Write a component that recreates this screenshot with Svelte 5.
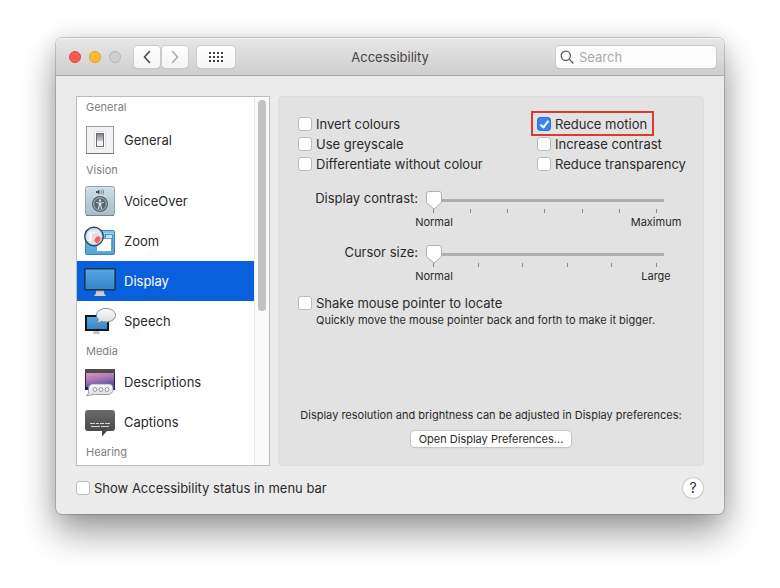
<script lang="ts">
    type Item = { name: string; icon: string };
    type Section = { title: string; items: Item[] };

    const sections: Section[] = [
        { title: "General", items: [{ name: "General", icon: "general" }] },
        {
            title: "Vision",
            items: [
                { name: "VoiceOver", icon: "voiceover" },
                { name: "Zoom", icon: "zoom" },
                { name: "Display", icon: "display" },
                { name: "Speech", icon: "speech" }
            ]
        },
        {
            title: "Media",
            items: [
                { name: "Descriptions", icon: "descriptions" },
                { name: "Captions", icon: "captions" }
            ]
        },
        { title: "Hearing", items: [] }
    ];

    const sliders = [
        { id: "contrast", label: "Display contrast:", ticks: 7, max: "Maximum" },
        { id: "cursor", label: "Cursor size:", ticks: 6, max: "Large" }
    ];

    let selected = $state("Display");
    let options = $state([
        { label: "Invert colours", checked: false, marked: false },
        { label: "Reduce motion", checked: true, marked: true },
        { label: "Use greyscale", checked: false, marked: false },
        { label: "Increase contrast", checked: false, marked: false },
        { label: "Differentiate without colour", checked: false, marked: false },
        { label: "Reduce transparency", checked: false, marked: false }
    ]);
</script>

{#snippet itemIcon(icon: string)}
    <svg class="icon" viewBox="0 0 32 32" aria-hidden="true">
        {#if icon === "general"}
            <rect x="2.5" y="2.5" width="27" height="27" fill="#f3f3f5" stroke="#9a9a9d" />
            <path d="M2 29.5h28" stroke="#77777a" />
            <rect x="10.5" y="7.5" width="11" height="17" rx="1" fill="#fff" stroke="#dcdce0" />
            <rect x="12.5" y="9.5" width="7" height="13" fill="#f4f4f4" stroke="#6c6c6f" />
            <rect x="13" y="10" width="6" height="7" fill="url(#switch)" />
        {:else if icon === "voiceover"}
            <rect x="1.5" y="1.5" width="29" height="29" rx="2" fill="url(#steel)" stroke="#93a5ad" />
            <path d="M2 30.5h28" stroke="#74818a" />
            <path d="M12 6h1.500l2-1.500v5l-2-1.500H12z" fill="#4b555b" />
            <path d="M17 5.500q1 1.500 0 3M18.700 4.500q1.800 2.500 0 5" fill="none" stroke="#5b666c" stroke-width=".8" />
            <circle cx="16" cy="19" r="8" fill="#56636a" />
            <circle cx="16" cy="19" r="6.300" fill="none" stroke="#b7c6cd" stroke-width=".9" />
            <circle cx="16" cy="15.500" r="1.200" fill="#d7e4ea" />
            <path d="M12.300 17.500l2.700.5h2l2.700-.5M16 18v2.500M15.200 18v3l-.9 3M16.800 18v3l.9 3" fill="none" stroke="#d7e4ea" stroke-width="1.100" />
        {:else if icon === "zoom"}
            <rect x="1.500" y="5.500" width="29" height="24" rx="1" fill="url(#sky)" stroke="#3b87b5" />
            <path d="M2 8.500h28" stroke="#a8d8f5" />
            <rect x="21.500" y="9.500" width="7" height="14" fill="#bfe2f7" stroke="#4b94c2" />
            <rect x="12.500" y="13.500" width="15" height="13" fill="#fff" stroke="#6ba6cc" />
            <circle cx="10" cy="11.500" r="9.200" fill="#dfeaf3" stroke="#394653" stroke-width="1.600" />
            <path d="M5 7h6v9H5z" fill="#f3f6fa" />
            <path d="M8 9h7v9H8z" fill="#f3d3d8" />
            <path d="M11.500 17.500a3.800 3.800 0 0 1 5-5.500 7.500 7.500 0 0 1-3 6.500z" fill="#e8636a" />
            <circle cx="10" cy="11.500" r="8" fill="none" stroke="#b9c8d5" stroke-width=".8" />
        {:else if icon === "display"}
            <path d="M12.500 25h7l.8 4 1.700 1.500v.5H10v-.5l1.700-1.500z" fill="#c9cdd0" />
            <path d="M12.500 25h7l.3 1.500h-7.600z" fill="#8f979d" />
            <rect x=".8" y="3.800" width="30.400" height="21" rx="1" fill="url(#screen)" stroke="#173451" stroke-width="1.600" />
        {:else if icon === "speech"}
            <path d="M10 26h5l1 3h-7z" fill="#bfc4c8" />
            <rect x="2" y="11" width="22" height="14" fill="url(#screen)" stroke="#101820" stroke-width="2" />
            <path d="M22 3.500c5.500 0 9.500 2.900 9.500 6.700s-4 6.800-9.500 6.800c-1.600 0-3.100-.3-4.400-.7-1.400 1.100-3.300 1.500-5.200 1.300 1.200-.9 2-2 2.100-3.200-1.300-1.200-2-2.600-2-4.200 0-3.800 4-6.700 9.500-6.700z" fill="url(#bubble)" stroke="#858b92" />
        {:else if icon === "descriptions"}
            <rect x="1" y="3" width="30" height="21" fill="#2b2238" />
            <rect x="1" y="3" width="30" height="4" fill="#4d4b50" />
            <rect x="2" y="7" width="28" height="14" fill="url(#sunset)" />
            <path d="M9 18h16a4 4 0 0 1 4 4.500v1a5 5 0 0 1-5 5H8c-1.500 1-3.500 1.300-5.500 1 1.500-1 2-2 2-3.500v-3.500A4.500 4.500 0 0 1 9 18z" fill="url(#bubble)" stroke="#8c8899" stroke-width=".8" />
            <g fill="#fff" stroke="#8b8993">
                <circle cx="11" cy="23.500" r="1.900" />
                <circle cx="17" cy="23.500" r="1.900" />
                <circle cx="23" cy="23.500" r="1.900" />
            </g>
        {:else if icon === "captions"}
            <path d="M4 4h24a3 3 0 0 1 3 3v15a3 3 0 0 1-3 3h-5l-5 5.500V25H4a3 3 0 0 1-3-3V7a3 3 0 0 1 3-3z" fill="url(#slate)" />
            <path d="M6 17.500h20" stroke="#d6d6d6" stroke-dasharray="5 1 3 1 4 1" />
            <path d="M7 20.500h18" stroke="#d6d6d6" stroke-dasharray="9 1 8 1" />
        {/if}
    </svg>
{/snippet}

<svg class="defs" width="0" height="0" aria-hidden="true">
    <defs>
        <linearGradient id="switch" x2="0" y2="1"><stop stop-color="#858588" /><stop offset="1" stop-color="#cfcfd2" /></linearGradient>
        <linearGradient id="steel" x2="0" y2="1"><stop stop-color="#d0e1e8" /><stop offset="1" stop-color="#a6bcc6" /></linearGradient>
        <linearGradient id="sky" x2="0" y2="1"><stop stop-color="#7fc4ee" /><stop offset="1" stop-color="#4ea3d8" /></linearGradient>
        <linearGradient id="screen" x2="0" y2="1"><stop stop-color="#57a9e4" /><stop offset="1" stop-color="#3584c8" /></linearGradient>
        <linearGradient id="bubble" x2="0" y2="1"><stop stop-color="#fbfbfd" /><stop offset="1" stop-color="#d9dce2" /></linearGradient>
        <linearGradient id="sunset" x2=".4" y2="1"><stop stop-color="#dd94ae" /><stop offset=".5" stop-color="#a97ab8" /><stop offset="1" stop-color="#5c50a2" /></linearGradient>
        <linearGradient id="slate" x2="0" y2="1"><stop stop-color="#6b6b6b" /><stop offset="1" stop-color="#404040" /></linearGradient>
    </defs>
</svg>

<main class="window">
    <header>
        <div class="tools">
            <div class="lights">
                <button class="light red" aria-label="Close"></button>
                <button class="light yellow" aria-label="Minimise"></button>
                <button class="light off" aria-label="Full screen" disabled></button>
            </div>
            <div class="nav">
                <button class="tool" aria-label="Back">
                    <svg width="8" height="14" viewBox="0 0 8 14"><path d="M6.500 1.500L1.500 7l5 5.500" fill="none" stroke="#4a4a4a" stroke-width="1.600" stroke-linecap="round" /></svg>
                </button>
                <button class="tool" aria-label="Forward">
                    <svg width="8" height="14" viewBox="0 0 8 14"><path d="M1.500 1.500l5 5.500-5 5.500" fill="none" stroke="#ababab" stroke-width="1.600" stroke-linecap="round" /></svg>
                </button>
            </div>
            <button class="tool wide" aria-label="Show all">
                <svg width="14" height="10" viewBox="0 0 14 10" fill="#3e3e3e">
                    {#each [0, 4, 8] as y}
                        {#each [0, 4, 8, 12] as x}
                            <rect {x} {y} width="2" height="2" />
                        {/each}
                    {/each}
                </svg>
            </button>
        </div>
        <h1>Accessibility</h1>
        <label class="search">
            <svg width="14" height="14" viewBox="0 0 14 14" fill="none" stroke="#555" stroke-width="1.200" stroke-linecap="round" aria-hidden="true">
                <circle cx="5.800" cy="5.800" r="4.600" />
                <path d="M9.200 9.200l3.800 3.800" />
            </svg>
            <input type="search" placeholder="Search" aria-label="Search" />
        </label>
    </header>

    <div class="content">
        <nav class="sidebar">
            <div class="list">
                {#each sections as section}
                    <h2>{section.title}</h2>
                    {#each section.items as item}
                        <button class="item" class:selected={selected === item.name} onclick={() => (selected = item.name)}>
                            {@render itemIcon(item.icon)}
                            {item.name}
                        </button>
                    {/each}
                {/each}
            </div>
            <div class="track"><div class="thumb"></div></div>
        </nav>

        <section class="panel">
            <div class="options">
                {#each options as option}
                    <label class="check" class:marked={option.marked}>
                        <input type="checkbox" bind:checked={option.checked} />
                        {option.label}
                    </label>
                {/each}
            </div>

            <div class="sliders">
                {#each sliders as slider}
                    <label for={slider.id}>{slider.label}</label>
                    <div class="slider">
                        <input id={slider.id} type="range" min="0" max="100" value="0" />
                        <div class="ticks">
                            {#each Array(slider.ticks) as _}
                                <i></i>
                            {/each}
                        </div>
                        <div class="ends">
                            <span>Normal</span>
                            <span>{slider.max}</span>
                        </div>
                    </div>
                {/each}
            </div>

            <label class="check">
                <input type="checkbox" />
                Shake mouse pointer to locate
            </label>
            <p class="hint">Quickly move the mouse pointer back and forth to make it bigger.</p>

            <div class="more">
                <p>Display resolution and brightness can be adjusted in Display preferences:</p>
                <button class="push">Open Display Preferences...</button>
            </div>
        </section>
    </div>

    <footer>
        <label class="check">
            <input type="checkbox" />
            Show Accessibility status in menu bar
        </label>
        <button class="help" aria-label="Help">?</button>
    </footer>
</main>

<style>
    :global(body) {
        background: #fff;
    }

    .defs {
        position: absolute;
    }

    .window {
        margin: 38px 56px 74px;
        border-radius: 6px;
        background: #ebebeb;
        box-shadow: 0 0 0 1px rgba(0, 0, 0, 0.16), 0 18px 36px rgba(0, 0, 0, 0.4), 0 0 20px rgba(0, 0, 0, 0.1);
        font-family: Inter, "Liberation Sans", sans-serif;
        font-size: 13px;
        line-height: 16px;
        color: #2a2a2a;
    }

    button,
    input {
        margin: 0;
        padding: 0;
        border: none;
        font: inherit;
        color: inherit;
    }

    h1,
    h2,
    p {
        margin: 0;
        font-weight: 400;
    }

    header {
        display: grid;
        grid-template-columns: 1fr auto 1fr;
        align-items: center;
        height: 38px;
        box-sizing: border-box;
        padding: 0 8px;
        border-bottom: 1px solid #ababab;
        border-radius: 6px 6px 0 0;
        background: linear-gradient(#e7e7e7, #cecece);
        box-shadow: inset 0 1px #f3f3f3;
    }

    .tools,
    .lights,
    .nav {
        display: flex;
        align-items: center;
    }

    .lights {
        gap: 8px;
        margin: 0 13px 0 5px;
    }

    .light {
        width: 12px;
        height: 12px;
        border-radius: 50%;
    }

    .red {
        background: #fb5b53;
        border: 1px solid #df4640;
    }

    .yellow {
        background: #fdbb2f;
        border: 1px solid #dfa023;
    }

    .off {
        background: #cfcfcf;
        border: 1px solid #b5b5b5;
    }

    .nav {
        gap: 2px;
        margin-right: 9px;
    }

    .tool {
        display: flex;
        align-items: center;
        justify-content: center;
        width: 26px;
        height: 22px;
        border-radius: 4px;
        background: linear-gradient(#fff, #f4f4f4);
        box-shadow: 0 0 0 1px #cbcbcb, 0 1px 1px #a5a5a5;
    }

    .wide {
        width: 38px;
    }

    h1 {
        font-size: 13px;
        color: #444;
    }

    .search {
        display: flex;
        align-items: center;
        justify-self: end;
        gap: 5px;
        width: 160px;
        height: 22px;
        box-sizing: border-box;
        padding-left: 4px;
        border-radius: 4px;
        background: #fcfcfc;
        box-shadow: 0 0 0 1px #cbcbcb, 0 1px 1px #a5a5a5;
    }

    .search input {
        flex: 1;
        min-width: 0;
        background: none;
        outline: none;
        appearance: none;
    }

    .search input::placeholder {
        color: #aaa;
        opacity: 1;
    }

    .content {
        display: flex;
        gap: 8px;
        padding: 20px 20px 0;
    }

    .sidebar {
        display: flex;
        flex: none;
        width: 194px;
        height: 370px;
        box-sizing: border-box;
        border: 1px solid #bdbdbd;
        background: #fff;
    }

    .list {
        flex: 1;
        overflow: hidden;
    }

    h2 {
        padding-left: 9px;
        font-size: 11px;
        line-height: 21px;
        color: #808080;
    }

    h2:first-child {
        padding-bottom: 2px;
    }

    .item {
        display: flex;
        align-items: center;
        gap: 8px;
        width: 100%;
        height: 40px;
        padding-left: 7px;
        background: none;
        text-align: left;
    }

    .selected {
        background: #0a60dc;
        color: #fff;
    }

    .icon {
        width: 32px;
        height: 32px;
    }

    .track {
        width: 15px;
        box-sizing: border-box;
        padding: 3px 3px 0;
        border-left: 1px solid #e8e8e8;
        background: #fafafa;
    }

    .thumb {
        width: 8px;
        height: 211px;
        border-radius: 4px;
        background: #c2c2c2;
    }

    .panel {
        flex: 1;
        display: flex;
        flex-direction: column;
        min-width: 0;
        box-sizing: border-box;
        padding: 19px 19px 18px;
        border: 1px solid #dcdcdc;
        border-radius: 4px;
        background: #e2e2e2;
    }

    .options {
        display: grid;
        grid-template-columns: 239px 1fr;
        row-gap: 4px;
        justify-items: start;
    }

    .check {
        position: relative;
        display: flex;
        align-items: center;
        gap: 4px;
        white-space: nowrap;
    }

    .check input {
        display: grid;
        place-items: center;
        width: 14px;
        height: 14px;
        box-sizing: border-box;
        border: 1px solid #bcbcbc;
        border-radius: 3px;
        background: #fff;
        appearance: none;
    }

    .check input:checked {
        border-color: #2f74e0;
        background: #3b82f0;
    }

    .check input:checked::before {
        content: "";
        width: 3px;
        height: 7px;
        margin-bottom: 2px;
        border: solid #fff;
        border-width: 0 2px 2px 0;
        transform: rotate(38deg);
    }

    .marked::after {
        content: "";
        position: absolute;
        inset: -5px -7px -4px -6px;
        border: 2px solid #d93a32;
    }

    .sliders {
        display: grid;
        grid-template-columns: 120px 238px;
        column-gap: 8px;
        row-gap: 8px;
        margin-top: 18px;
        text-align: right;
    }

    .slider {
        display: flex;
        flex-direction: column;
        height: 46px;
    }

    .slider input {
        width: 100%;
        height: 20px;
        background: linear-gradient(#aeaeae, #aeaeae) center / 100% 3px no-repeat;
        appearance: none;
    }

    .slider input::-webkit-slider-thumb {
        width: 16px;
        height: 20px;
        background: url("data:image/svg+xml,%3Csvg xmlns='http://www.w3.org/2000/svg' viewBox='0 0 16 20'%3E%3Cpath d='M3 1.500h10a2.500 2.500 0 0 1 2.500 2.500v7.500c0 .8-.3 1.300-.8 1.800L8 19l-6.700-5.700c-.5-.5-.8-1-.8-1.800V4A2.500 2.500 0 0 1 3 1.500z' fill='white' stroke='%23b0b0b0'/%3E%3C/svg%3E");
        appearance: none;
    }

    .ticks {
        display: flex;
        justify-content: space-between;
        padding: 0 7px;
        margin-top: -1px;
    }

    .ticks i {
        width: 1px;
        height: 4px;
        background: #8a8a8a;
    }

    .ends {
        display: flex;
        justify-content: space-between;
        margin: 1px -32px 0;
        font-size: 11px;
    }

    .ends span {
        width: 80px;
        text-align: center;
    }

    .panel > .check {
        margin-top: 5px;
    }

    .hint {
        margin: 1px 0 0 18px;
        font-size: 11px;
        white-space: nowrap;
    }

    .more {
        display: flex;
        flex-direction: column;
        align-items: center;
        gap: 8px;
        margin-top: auto;
        font-size: 11px;
        white-space: nowrap;
    }

    .push {
        height: 16px;
        padding: 0 8px;
        border-radius: 4px;
        background: #fff;
        box-shadow: 0 0 0 1px #c6c6c6, 0 1px 1px #a8a8a8;
        line-height: 16px;
    }

    footer {
        display: flex;
        align-items: center;
        justify-content: space-between;
        padding: 12px 21px 16px 20px;
    }

    .help {
        width: 20px;
        height: 20px;
        border-radius: 50%;
        background: #fff;
        box-shadow: 0 0 0 1px #cdcdcd, 0 1px 1px #aaa;
        font-size: 14px;
    }
</style>
